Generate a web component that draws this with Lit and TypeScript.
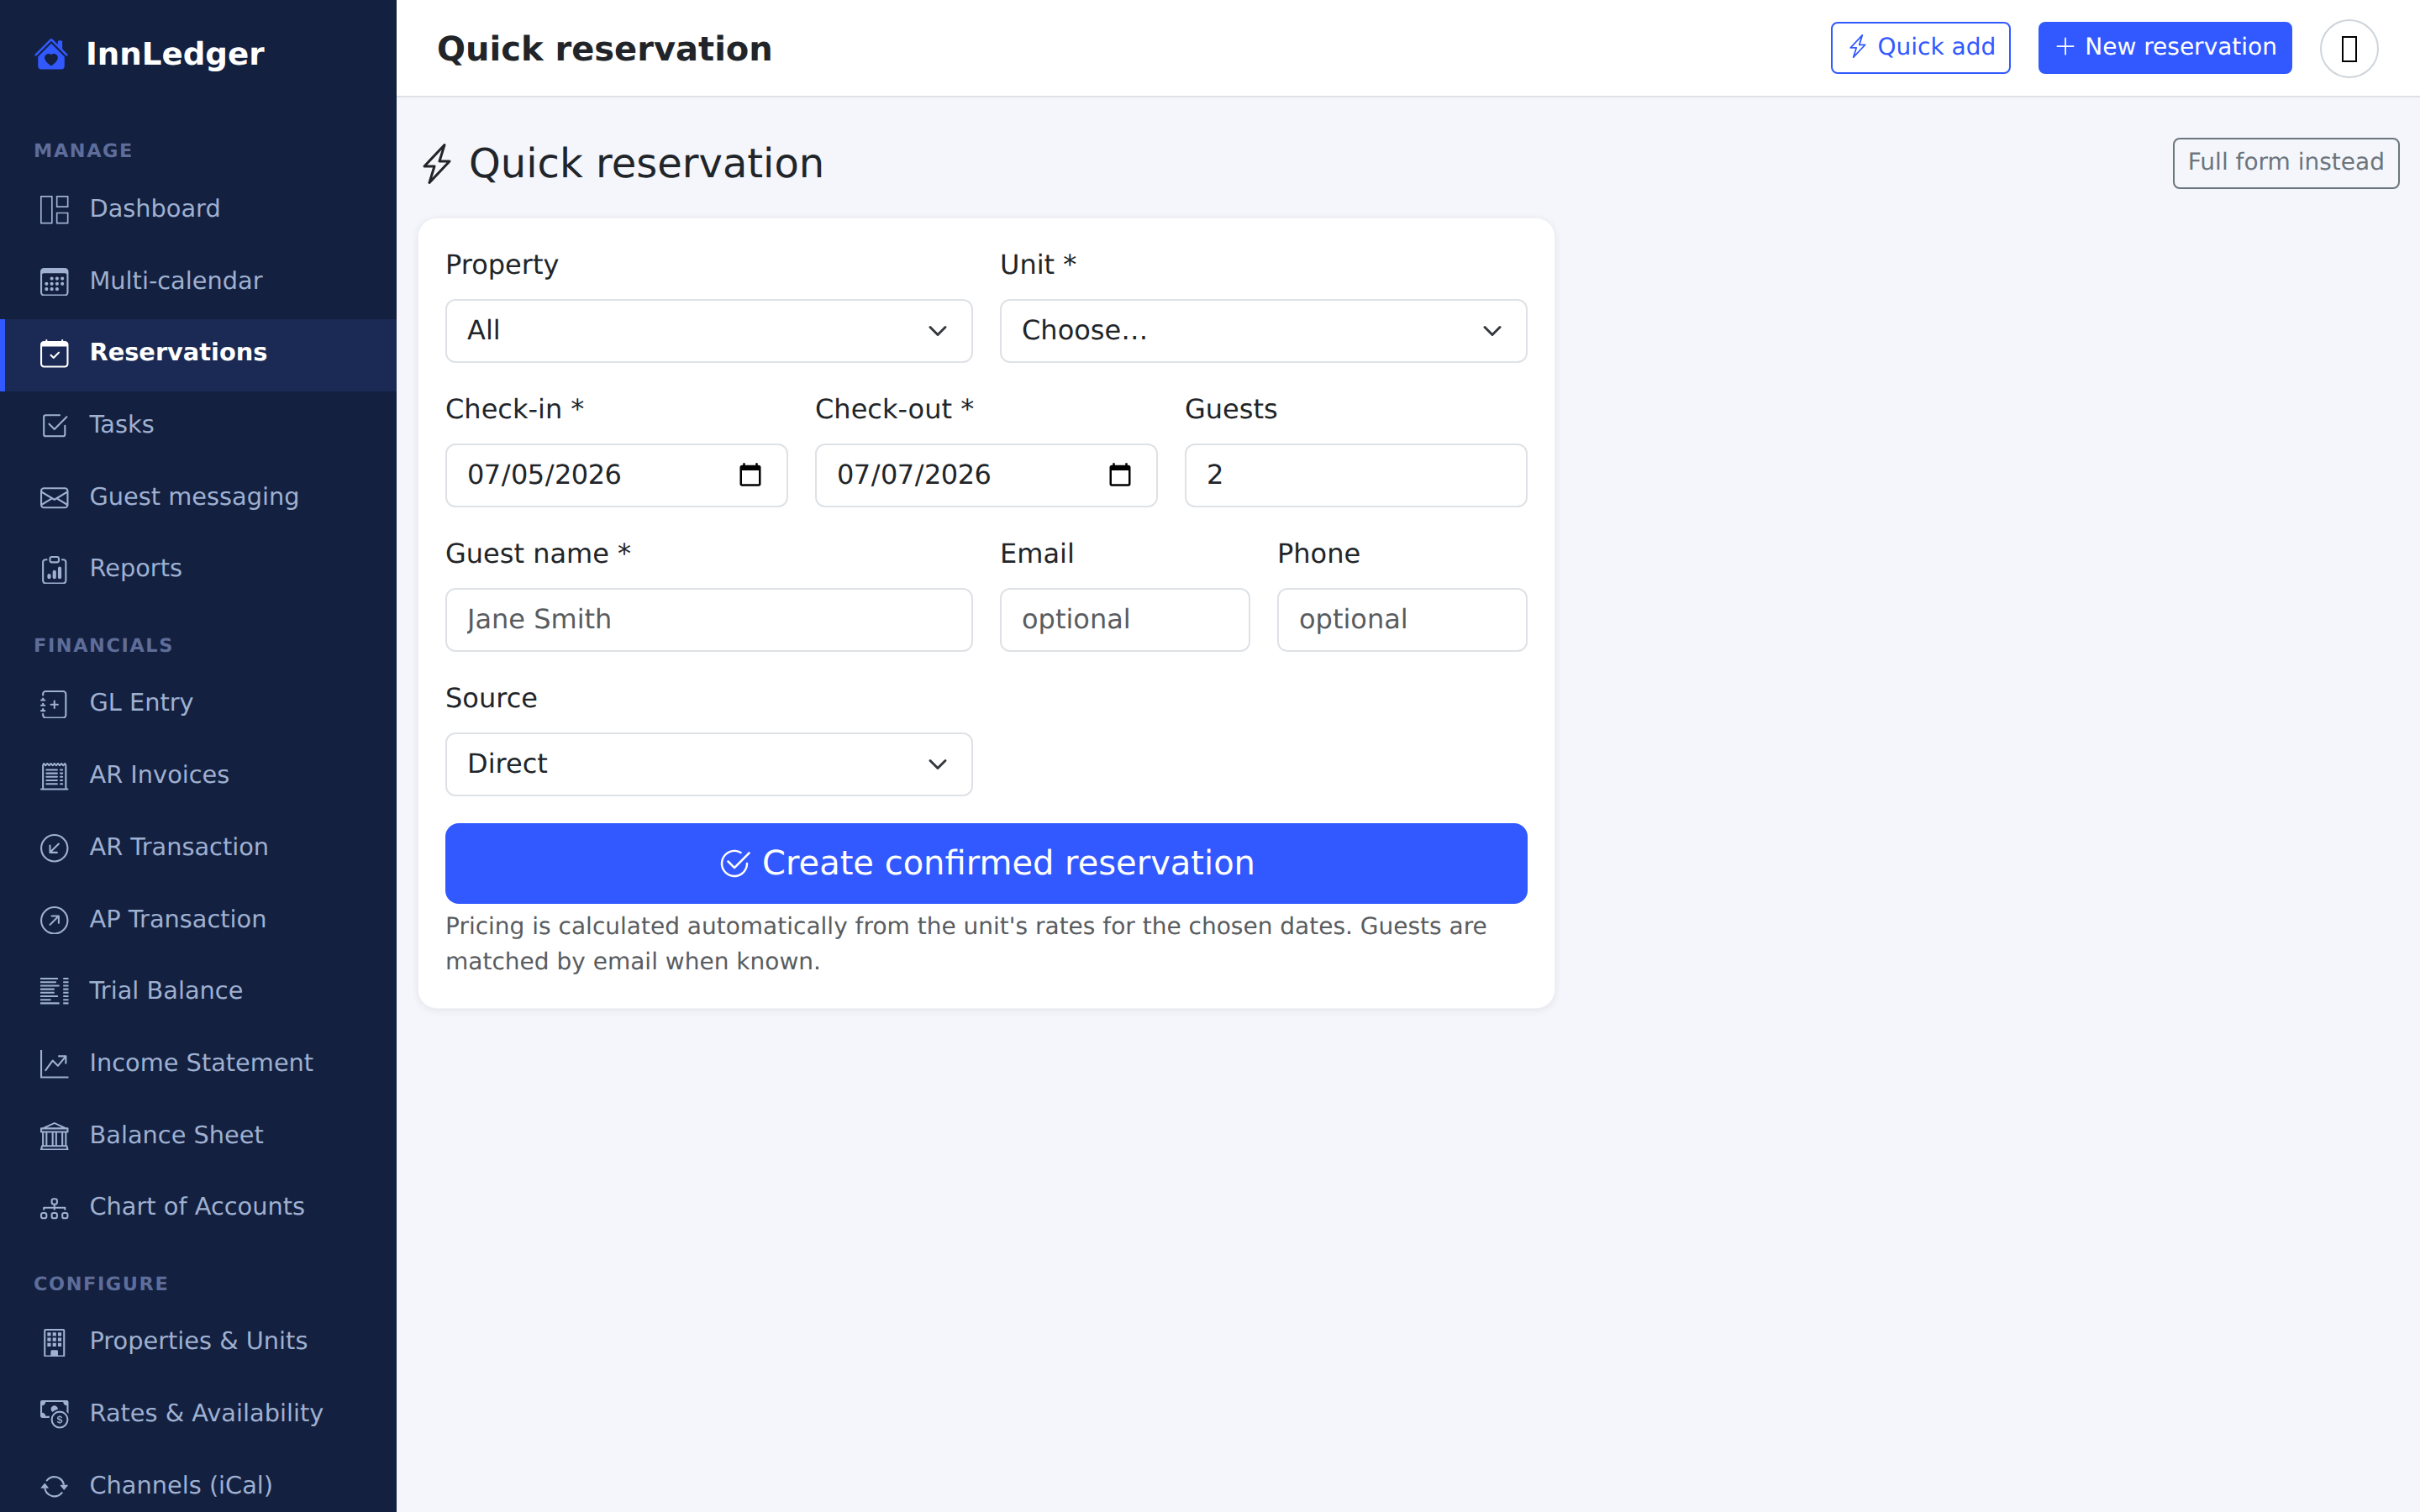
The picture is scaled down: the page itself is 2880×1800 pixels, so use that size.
import { LitElement, html, css, svg } from 'lit';
import { customElement } from 'lit/decorators.js';

const ICONS: Record<string, string[]> = {
  brand: [
    'M7.293 1.5a1 1 0 0 1 1.414 0L11 3.793V2.5a.5.5 0 0 1 .5-.5h1a.5.5 0 0 1 .5.5v3.293l2.354 2.353a.5.5 0 0 1-.708.707L8 2.207 1.354 8.853a.5.5 0 1 1-.708-.707z',
    'm14 9.293-6-6-6 6V13.5A1.5 1.5 0 0 0 3.5 15h9a1.5 1.5 0 0 0 1.5-1.5zm-6-.811c1.664-1.673 5.825 1.254 0 5.018-5.825-3.764-1.664-6.691 0-5.018',
  ],
  dashboard: [
    'M.3 0h6.4a.3.3 0 0 1 .3.3v15.4a.3.3 0 0 1-.3.3H.3a.3.3 0 0 1-.3-.3V.3A.3.3 0 0 1 .3 0m.5.8v14.4h5.4V.8z',
    'M9.3 0h6.4a.3.3 0 0 1 .3.3v6.1a.3.3 0 0 1-.3.3H9.3a.3.3 0 0 1-.3-.3V.3a.3.3 0 0 1 .3-.3m.5.8v5.1h5.4V.8z',
    'M9.3 9.4h6.4a.3.3 0 0 1 .3.3v6a.3.3 0 0 1-.3.3H9.3a.3.3 0 0 1-.3-.3v-6a.3.3 0 0 1 .3-.3m.5.8v5h5.4v-5z',
  ],
  calendar: [
    'M14 0H2a2 2 0 0 0-2 2v12a2 2 0 0 0 2 2h12a2 2 0 0 0 2-2V2a2 2 0 0 0-2-2M1 3.857C1 3.384 1.448 3 2 3h12c.552 0 1 .384 1 .857v10.286c0 .473-.448.857-1 .857H2c-.552 0-1-.384-1-.857z',
    'M6.5 7a1 1 0 1 0 0-2 1 1 0 0 0 0 2m3 0a1 1 0 1 0 0-2 1 1 0 0 0 0 2m3 0a1 1 0 1 0 0-2 1 1 0 0 0 0 2m-9 3a1 1 0 1 0 0-2 1 1 0 0 0 0 2m3 0a1 1 0 1 0 0-2 1 1 0 0 0 0 2m3 0a1 1 0 1 0 0-2 1 1 0 0 0 0 2m3 0a1 1 0 1 0 0-2 1 1 0 0 0 0 2m-9 3a1 1 0 1 0 0-2 1 1 0 0 0 0 2m3 0a1 1 0 1 0 0-2 1 1 0 0 0 0 2m3 0a1 1 0 1 0 0-2 1 1 0 0 0 0 2',
  ],
  calendarCheck: [
    'M10.854 7.146a.5.5 0 0 1 0 .708l-3 3a.5.5 0 0 1-.708 0l-1.5-1.5a.5.5 0 1 1 .708-.708L7.5 9.793l2.646-2.647a.5.5 0 0 1 .708 0',
    'M3.5 0a.5.5 0 0 1 .5.5V1h8V.5a.5.5 0 0 1 1 0V1h1a2 2 0 0 1 2 2v11a2 2 0 0 1-2 2H2a2 2 0 0 1-2-2V3a2 2 0 0 1 2-2h1V.5a.5.5 0 0 1 .5-.5M1 4v10a1 1 0 0 0 1 1h12a1 1 0 0 0 1-1V4z',
  ],
  tasks: [
    'M3 14.5A1.5 1.5 0 0 1 1.5 13V3A1.5 1.5 0 0 1 3 1.5h8a.5.5 0 0 1 0 1H3a.5.5 0 0 0-.5.5v10a.5.5 0 0 0 .5.5h10a.5.5 0 0 0 .5-.5V8a.5.5 0 0 1 1 0v5a1.5 1.5 0 0 1-1.5 1.5z',
    'm8.354 10.354 7-7a.5.5 0 0 0-.708-.708L8 9.293 5.354 6.646a.5.5 0 1 0-.708.708l3 3a.5.5 0 0 0 .708 0',
  ],
  envelope: [
    'M0 4a2 2 0 0 1 2-2h12a2 2 0 0 1 2 2v8a2 2 0 0 1-2 2H2a2 2 0 0 1-2-2zm2-1a1 1 0 0 0-1 1v.217l7 4.2 7-4.2V4a1 1 0 0 0-1-1zm13 2.383-4.708 2.825L15 11.105zm-.034 6.876-5.64-3.471L8 9.583l-1.326-.795-5.64 3.47A1 1 0 0 0 2 13h12a1 1 0 0 0 .966-.741M1 11.105l4.708-2.897L1 5.383z',
  ],
  reports: [
    'M4 11a1 1 0 1 1 2 0v1a1 1 0 1 1-2 0zm6-4a1 1 0 1 1 2 0v5a1 1 0 1 1-2 0zM7 9a1 1 0 0 1 2 0v3a1 1 0 1 1-2 0z',
    'M4 1.5H3a2 2 0 0 0-2 2V14a2 2 0 0 0 2 2h10a2 2 0 0 0 2-2V3.5a2 2 0 0 0-2-2h-1v1h1a1 1 0 0 1 1 1V14a1 1 0 0 1-1 1H3a1 1 0 0 1-1-1V3.5a1 1 0 0 1 1-1h1z',
    'M9.5 1a.5.5 0 0 1 .5.5v1a.5.5 0 0 1-.5.5h-3a.5.5 0 0 1-.5-.5v-1a.5.5 0 0 1 .5-.5zm-3-1A1.5 1.5 0 0 0 5 1.5v1A1.5 1.5 0 0 0 6.5 4h3A1.5 1.5 0 0 0 11 2.5v-1A1.5 1.5 0 0 0 9.5 0z',
  ],
  journal: [
    'M8 5.5a.5.5 0 0 1 .5.5v1.5H10a.5.5 0 0 1 0 1H8.5V10a.5.5 0 0 1-1 0V8.5H6a.5.5 0 0 1 0-1h1.5V6a.5.5 0 0 1 .5-.5',
    'M3 0h10a2 2 0 0 1 2 2v12a2 2 0 0 1-2 2H3a2 2 0 0 1-2-2v-1h1v1a1 1 0 0 0 1 1h10a1 1 0 0 0 1-1V2a1 1 0 0 0-1-1H3a1 1 0 0 0-1 1v1H1V2a2 2 0 0 1 2-2',
    'M1 5v-.5a.5.5 0 0 1 1 0V5h.5a.5.5 0 0 1 0 1h-2a.5.5 0 0 1 0-1zm0 3v-.5a.5.5 0 0 1 1 0V8h.5a.5.5 0 0 1 0 1h-2a.5.5 0 0 1 0-1zm0 3v-.5a.5.5 0 0 1 1 0v.5h.5a.5.5 0 0 1 0 1h-2a.5.5 0 0 1 0-1z',
  ],
  receipt: [
    'M3 4.5a.5.5 0 0 1 .5-.5h6a.5.5 0 1 1 0 1h-6a.5.5 0 0 1-.5-.5m0 2a.5.5 0 0 1 .5-.5h6a.5.5 0 1 1 0 1h-6a.5.5 0 0 1-.5-.5m0 2a.5.5 0 0 1 .5-.5h6a.5.5 0 1 1 0 1h-6a.5.5 0 0 1-.5-.5m0 2a.5.5 0 0 1 .5-.5h6a.5.5 0 0 1 0 1h-6a.5.5 0 0 1-.5-.5m0 2a.5.5 0 0 1 .5-.5h6a.5.5 0 0 1 0 1h-6a.5.5 0 0 1-.5-.5M11.5 4a.5.5 0 0 0 0 1h1a.5.5 0 0 0 0-1zm0 2a.5.5 0 0 0 0 1h1a.5.5 0 0 0 0-1zm0 2a.5.5 0 0 0 0 1h1a.5.5 0 0 0 0-1zm0 2a.5.5 0 0 0 0 1h1a.5.5 0 0 0 0-1zm0 2a.5.5 0 0 0 0 1h1a.5.5 0 0 0 0-1z',
    'M2.354.646a.5.5 0 0 0-.801.13l-.5 1A.5.5 0 0 0 1 2v13H.5a.5.5 0 0 0 0 1h15a.5.5 0 0 0 0-1H15V2a.5.5 0 0 0-.053-.224l-.5-1a.5.5 0 0 0-.8-.13L13 1.293l-.646-.647a.5.5 0 0 0-.708 0L11 1.293l-.646-.647a.5.5 0 0 0-.708 0L9 1.293 8.354.646a.5.5 0 0 0-.708 0L7 1.293 6.354.646a.5.5 0 0 0-.708 0L5 1.293 4.354.646a.5.5 0 0 0-.708 0L3 1.293zm-.217 1.198.51.51a.5.5 0 0 0 .707 0L4 1.707l.646.647a.5.5 0 0 0 .708 0L6 1.707l.646.647a.5.5 0 0 0 .708 0L8 1.707l.646.647a.5.5 0 0 0 .708 0L10 1.707l.646.647a.5.5 0 0 0 .708 0L12 1.707l.646.647a.5.5 0 0 0 .708 0l.509-.51.137.274V15H2V2.118z',
  ],
  arrowIn: [
    'M1 8a7 7 0 1 0 14 0A7 7 0 0 0 1 8m15 0A8 8 0 1 1 0 8a8 8 0 0 1 16 0m-5.904-2.854a.5.5 0 1 1 .707.708L6.707 9.95h2.768a.5.5 0 1 1 0 1H5.5a.5.5 0 0 1-.5-.5V6.475a.5.5 0 1 1 1 0v2.768z',
  ],
  arrowOut: [
    'M1 8a7 7 0 1 0 14 0A7 7 0 0 0 1 8m15 0A8 8 0 1 1 0 8a8 8 0 0 1 16 0M5.854 10.803a.5.5 0 1 1-.708-.707L9.243 6H6.475a.5.5 0 1 1 0-1h3.975a.5.5 0 0 1 .5.5v3.975a.5.5 0 1 1-1 0V6.707z',
  ],
  columns: [
    'M0 0h10v1H0zM0 2h9v1H0zM0 4h10.8v1H0zM0 6h8v1H0zM0 8h8v1H0zM0 10h10v1H0zM0 12h6v1H0zM0 14h10.8v1H0z',
    'M13 0h3v1h-3zM13 2h3v1h-3zM13 4h3v1h-3zM13 6h3v1h-3zM13 8h3v1h-3zM13 10h3v1h-3zM13 12h3v1h-3zM13 14h3v1h-3z',
  ],
  graph: [
    'M0 0h1v15h15v1H0zm10 3.5a.5.5 0 0 1 .5-.5h4a.5.5 0 0 1 .5.5v4a.5.5 0 0 1-1 0V4.9l-3.613 4.417a.5.5 0 0 1-.74.037L7.06 6.767l-3.656 5.027a.5.5 0 0 1-.808-.588l4-5.5a.5.5 0 0 1 .758-.06l2.609 2.61L13.445 4H10.5a.5.5 0 0 1-.5-.5',
  ],
  bank: [
    'm8 0 6.61 3h.89a.5.5 0 0 1 .5.5v2a.5.5 0 0 1-.5.5H15v7a.5.5 0 0 1 .485.38l.5 2a.498.498 0 0 1-.485.62H.5a.498.498 0 0 1-.485-.62l.5-2A.5.5 0 0 1 1 13V6H.5a.5.5 0 0 1-.5-.5v-2A.5.5 0 0 1 .5 3h.89zM3.777 3h8.447L8 1zM2 6v7h1V6zm2 0v7h2.5V6zm3.5 0v7h1V6zm2 0v7H12V6zM13 6v7h1V6zm2-1V4H1v1zm-.39 9H1.39l-.25 1h13.72z',
  ],
  diagram: [
    'M6 3.5A1.5 1.5 0 0 1 7.5 2h1A1.5 1.5 0 0 1 10 3.5v1A1.5 1.5 0 0 1 8.5 6v1H14a.5.5 0 0 1 .5.5v1a.5.5 0 0 1-1 0V8h-5v.5a.5.5 0 0 1-1 0V8h-5v.5a.5.5 0 0 1-1 0v-1A.5.5 0 0 1 2 7h5.5V6A1.5 1.5 0 0 1 6 4.5zM8.5 5a.5.5 0 0 0 .5-.5v-1a.5.5 0 0 0-.5-.5h-1a.5.5 0 0 0-.5.5v1a.5.5 0 0 0 .5.5zM0 11.5A1.5 1.5 0 0 1 1.5 10h1A1.5 1.5 0 0 1 4 11.5v1A1.5 1.5 0 0 1 2.5 14h-1A1.5 1.5 0 0 1 0 12.5zm1.5-.5a.5.5 0 0 0-.5.5v1a.5.5 0 0 0 .5.5h1a.5.5 0 0 0 .5-.5v-1a.5.5 0 0 0-.5-.5zm4.5.5A1.5 1.5 0 0 1 7.5 10h1a1.5 1.5 0 0 1 1.5 1.5v1A1.5 1.5 0 0 1 8.5 14h-1A1.5 1.5 0 0 1 6 12.5zm1.5-.5a.5.5 0 0 0-.5.5v1a.5.5 0 0 0 .5.5h1a.5.5 0 0 0 .5-.5v-1a.5.5 0 0 0-.5-.5zm4.5.5a1.5 1.5 0 0 1 1.5-1.5h1a1.5 1.5 0 0 1 1.5 1.5v1a1.5 1.5 0 0 1-1.5 1.5h-1a1.5 1.5 0 0 1-1.5-1.5zm1.5-.5a.5.5 0 0 0-.5.5v1a.5.5 0 0 0 .5.5h1a.5.5 0 0 0 .5-.5v-1a.5.5 0 0 0-.5-.5z',
  ],
  building: [
    'M2 1a1 1 0 0 1 1-1h10a1 1 0 0 1 1 1v14a1 1 0 0 1-1 1H3a1 1 0 0 1-1-1zm11 0H3v14h3v-2.5a.5.5 0 0 1 .5-.5h3a.5.5 0 0 1 .5.5V15h3z',
    'M6 13h4v2.5H6z',
    'M4 2h2v2H4zM7 2h2v2H7zM10 2h2v2h-2zM4 5h2v2H4zM7 5h2v2H7zM10 5h2v2h-2zM4 8h2v2H4zM7 8h2v2H7zM10 8h2v2h-2z',
  ],
  cash: [
    'M11 15a4 4 0 1 0 0-8 4 4 0 0 0 0 8m5-4a5 5 0 1 1-10 0 5 5 0 0 1 10 0',
    'M9.438 11.944c.047.596.518 1.06 1.363 1.116v.44h.375v-.443c.875-.061 1.386-.529 1.386-1.207 0-.618-.39-.936-1.09-1.1l-.296-.07v-1.2c.376.043.614.248.671.532h.658c-.047-.575-.54-1.024-1.329-1.073V8.5h-.375v.45c-.747.073-1.255.522-1.255 1.158 0 .562.378.92 1.007 1.066l.248.061v1.272c-.384-.058-.639-.27-.696-.563h-.668zm1.36-1.354c-.369-.085-.569-.26-.569-.522 0-.294.216-.514.572-.578v1.1zm.432.746c.449.104.655.272.655.569 0 .339-.257.571-.709.614v-1.195z',
    'M1 0a1 1 0 0 0-1 1v8a1 1 0 0 0 1 1h4.083q.088-.517.258-1H3a2 2 0 0 0-2-2V3a2 2 0 0 0 2-2h10a2 2 0 0 0 2 2v3.528c.38.34.717.728 1 1.154V1a1 1 0 0 0-1-1z',
    'M9.998 5.083 10 5a2 2 0 1 0-3.132 1.65 6 6 0 0 1 3.13-1.567',
  ],
  repeat: [
    'M11.534 7h3.932a.25.25 0 0 1 .192.41l-1.966 2.36a.25.25 0 0 1-.384 0l-1.966-2.36a.25.25 0 0 1 .192-.41m-11 2h3.932a.25.25 0 0 0 .192-.41L2.692 6.23a.25.25 0 0 0-.384 0L.342 8.59A.25.25 0 0 0 .534 9',
    'M8 3c-1.552 0-2.94.707-3.857 1.818a.5.5 0 1 1-.771-.636A6.002 6.002 0 0 1 13.917 7H12.9A5 5 0 0 0 8 3M3.1 9a5.002 5.002 0 0 0 8.757 2.182.5.5 0 1 1 .771.636A6.002 6.002 0 0 1 2.083 9z',
  ],
  bolt: [
    'M11.251.068a.5.5 0 0 1 .227.58L9.677 6.5H13a.5.5 0 0 1 .364.843l-8 8.5a.5.5 0 0 1-.842-.49L6.323 9.5H3a.5.5 0 0 1-.364-.843l8-8.5a.5.5 0 0 1 .615-.09zM4.157 8.5H7a.5.5 0 0 1 .478.647L6.11 13.59l5.732-6.09H9a.5.5 0 0 1-.478-.647L9.89 2.41z',
  ],
  plus: [
    'M8 2a.5.5 0 0 1 .5.5v5h5a.5.5 0 0 1 0 1h-5v5a.5.5 0 0 1-1 0v-5h-5a.5.5 0 0 1 0-1h5v-5A.5.5 0 0 1 8 2',
  ],
  checkCircle: [
    'M2.5 8a5.5 5.5 0 0 1 8.25-4.764.5.5 0 0 0 .5-.866A6.5 6.5 0 1 0 14.5 8a.5.5 0 0 0-1 0 5.5 5.5 0 1 1-11 0',
    'M15.354 3.354a.5.5 0 0 0-.708-.708L8 9.293 5.354 6.646a.5.5 0 1 0-.708.708l3 3a.5.5 0 0 0 .708 0z',
  ],
};

const icon = (name: string, cls = '') => html`<svg class="bi ${cls}" viewBox="0 0 16 16" fill="currentColor">
  ${ICONS[name].map(d => svg`<path d=${d}></path>`)}
</svg>`;

const NAV = [
  {
    title: 'MANAGE',
    items: [
      ['dashboard', 'Dashboard'],
      ['calendar', 'Multi-calendar'],
      ['calendarCheck', 'Reservations'],
      ['tasks', 'Tasks'],
      ['envelope', 'Guest messaging'],
      ['reports', 'Reports'],
    ],
  },
  {
    title: 'FINANCIALS',
    items: [
      ['journal', 'GL Entry'],
      ['receipt', 'AR Invoices'],
      ['arrowIn', 'AR Transaction'],
      ['arrowOut', 'AP Transaction'],
      ['columns', 'Trial Balance'],
      ['graph', 'Income Statement'],
      ['bank', 'Balance Sheet'],
      ['diagram', 'Chart of Accounts'],
    ],
  },
  {
    title: 'CONFIGURE',
    items: [
      ['building', 'Properties & Units'],
      ['cash', 'Rates & Availability'],
      ['repeat', 'Channels (iCal)'],
    ],
  },
];

@customElement('app-root')
export class AppRoot extends LitElement {
  static styles = css`
    :host {
      display: block;
      font-family: "DejaVu Sans", sans-serif;
      color: #212529;
      text-rendering: geometricPrecision;
    }

    * {
      box-sizing: border-box;
    }

    .bi {
      display: block;
      flex: none;
    }

    .shell {
      display: flex;
      height: 1800px;
      overflow: hidden;
      background: #f4f6fb;
    }

    .sidebar {
      width: 472px;
      flex: none;
      height: 100%;
      overflow: hidden;
      background: #132040;
    }

    .brand {
      display: flex;
      align-items: center;
      gap: 20px;
      height: 134px;
      padding: 0 0 7px 40px;
      color: #fff;
      font-size: 37.2px;
      font-weight: 700;
    }

    .brand .bi {
      width: 42px;
      height: 42px;
      color: #3159ff;
    }

    .section {
      height: 74.5px;
      padding: 31px 0 0 40px;
      font-size: 22.4px;
      line-height: 30px;
      font-weight: 700;
      letter-spacing: 1.6px;
      color: #5e6d99;
    }

    .nav-link {
      display: flex;
      align-items: center;
      gap: 25px;
      height: 85.7px;
      padding: 0 0 3px 42px;
      border-left: 6px solid transparent;
      font-size: 28.8px;
      color: #9fb0d0;
    }

    .nav-link span {
      padding-bottom: 4px;
    }

    .nav-link.active {
      background: #1b2a54;
      border-left-color: #3159ff;
      color: #fff;
      font-weight: 700;
    }

    .nav-link .bi {
      width: 33.5px;
      height: 33.5px;
    }

    .main {
      flex: 1;
      min-width: 0;
    }

    .topbar {
      display: flex;
      align-items: center;
      gap: 33px;
      height: 116px;
      padding: 0 49px 0 48px;
      background: #fff;
      border-bottom: 2px solid #dee2e6;
    }

    .topbar h1 {
      flex: 1;
      margin: 0;
      padding-top: 3px;
      font-size: 40px;
      font-weight: 700;
    }

    .btn {
      display: inline-flex;
      align-items: center;
      justify-content: center;
      gap: 9px;
      height: 62px;
      padding: 0 16px 4px;
      border: 2px solid #3159ff;
      border-radius: 8px;
      background: transparent;
      color: #3159ff;
      font-family: inherit;
      font-size: 28px;
      text-rendering: inherit;
    }

    .btn .bi {
      width: 28px;
      height: 28px;
    }

    .btn.solid {
      background: #3159ff;
      color: #fff;
    }

    .avatar {
      display: flex;
      align-items: center;
      justify-content: center;
      width: 70px;
      height: 70px;
      margin-top: 2px;
      border: 2px solid #ced4da;
      border-radius: 50%;
      background: #fff;
    }

    .tofu {
      width: 18px;
      height: 31px;
      border: 2px solid #000;
    }

    .content {
      padding: 48px 24px;
    }

    .page-head {
      display: flex;
      align-items: center;
      justify-content: space-between;
      height: 61px;
      margin-bottom: 33px;
    }

    .page-head h2 {
      display: flex;
      align-items: center;
      gap: 14px;
      margin: 0;
      font-size: 48px;
      font-weight: 400;
    }

    .page-head .bi {
      width: 48px;
      height: 48px;
    }

    .btn.muted {
      height: 61px;
      border-color: #6c757d;
      color: #6c757d;
    }

    .card {
      width: 1356px;
      padding: 32px 32px 34px;
      background: #fff;
      background-clip: padding-box;
      border: 2px solid rgba(0, 0, 0, 0.012);
      border-radius: 24px;
      box-shadow: 0 2px 8px rgba(0, 0, 0, 0.06);
    }

    .grid {
      display: grid;
      grid-template-columns: repeat(12, 1fr);
      gap: 32px;
    }

    .span-3 { grid-column: span 3; }
    .span-4 { grid-column: span 4; }
    .span-6 { grid-column: span 6; }
    .span-12 { grid-column: span 12; }

    label {
      display: block;
      margin: -1px 0 17px;
      font-size: 32px;
      line-height: 48px;
    }

    .control {
      display: block;
      width: 100%;
      height: 76px;
      padding: 0 24px 3px;
      border: 2px solid #dee2e6;
      border-radius: 12px;
      background: #fff;
      color: #212529;
      font-family: inherit;
      font-size: 32px;
      text-rendering: inherit;
      outline: none;
      appearance: none;
    }

    .control::placeholder {
      color: #595c5f;
      opacity: 1;
    }

    select.control {
      background-image: url("data:image/svg+xml,%3csvg xmlns='http://www.w3.org/2000/svg' viewBox='0 0 16 16'%3e%3cpath fill='none' stroke='%23343a40' stroke-linecap='round' stroke-linejoin='round' stroke-width='2' d='m2 5 6 6 6-6'/%3e%3c/svg%3e");
      background-repeat: no-repeat;
      background-position: right 24px center;
      background-size: 32px 24px;
    }

    input[type="date"] {
      letter-spacing: -0.5px;
    }

    input[type="date"]::-webkit-datetime-edit {
      margin-left: -1px;
    }

    input[type="date"]::-webkit-calendar-picker-indicator {
      width: 32px;
      height: 32px;
      margin: 2px 3.5px 0 0;
      padding: 0;
    }

    .submit {
      display: flex;
      align-items: center;
      justify-content: center;
      gap: 13px;
      width: 100%;
      height: 96px;
      border: 0;
      border-radius: 16px;
      background: #3159ff;
      color: #fff;
      font-family: inherit;
      font-size: 40px;
      text-rendering: inherit;
    }

    .submit .bi {
      width: 40px;
      height: 40px;
    }

    .help {
      margin: 6px 0 0;
      font-size: 28px;
      line-height: 42px;
      color: #595c5f;
    }
  `;

  render() {
    return html`
      <div class="shell">
        <aside class="sidebar">
          <div class="brand">${icon('brand')}<span>InnLedger</span></div>
          ${NAV.map(group => html`
            <div class="section">${group.title}</div>
            ${group.items.map(([ic, label]) => html`
              <div class="nav-link ${label === 'Reservations' ? 'active' : ''}">
                ${icon(ic)}<span>${label}</span>
              </div>
            `)}
          `)}
        </aside>
        <div class="main">
          <header class="topbar">
            <h1>Quick reservation</h1>
            <button class="btn">${icon('bolt')}Quick add</button>
            <button class="btn solid">${icon('plus')}New reservation</button>
            <div class="avatar"><div class="tofu"></div></div>
          </header>
          <div class="content">
            <div class="page-head">
              <h2>${icon('bolt')}Quick reservation</h2>
              <button class="btn muted">Full form instead</button>
            </div>
            <section class="card">
              <div class="grid">
                <div class="span-6">
                  <label>Property</label>
                  <select class="control"><option>All</option></select>
                </div>
                <div class="span-6">
                  <label>Unit *</label>
                  <select class="control"><option>Choose…</option></select>
                </div>
                <div class="span-4">
                  <label>Check-in *</label>
                  <input class="control" type="date" value="2026-07-05" />
                </div>
                <div class="span-4">
                  <label>Check-out *</label>
                  <input class="control" type="date" value="2026-07-07" />
                </div>
                <div class="span-4">
                  <label>Guests</label>
                  <input class="control" type="number" value="2" />
                </div>
                <div class="span-6">
                  <label>Guest name *</label>
                  <input class="control" placeholder="Jane Smith" />
                </div>
                <div class="span-3">
                  <label>Email</label>
                  <input class="control" placeholder="optional" />
                </div>
                <div class="span-3">
                  <label>Phone</label>
                  <input class="control" placeholder="optional" />
                </div>
                <div class="span-6">
                  <label>Source</label>
                  <select class="control"><option>Direct</option></select>
                </div>
                <div class="span-12">
                  <button class="submit">${icon('checkCircle')}Create confirmed reservation</button>
                  <p class="help">Pricing is calculated automatically from the unit's rates for the chosen dates. Guests are matched by email when known.</p>
                </div>
              </div>
            </section>
          </div>
        </div>
      </div>
    `;
  }
}
